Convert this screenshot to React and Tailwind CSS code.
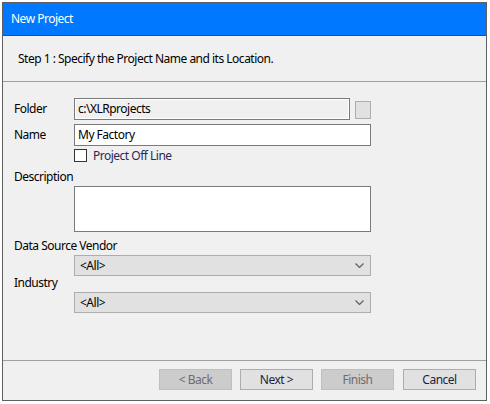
import React from 'react'

const font = { fontFamily: '"Noto Sans", "Open Sans", sans-serif' }

function Chevron() {
  return (
    <svg width="9" height="5" viewBox="0 0 9 5" className="shrink-0">
      <path d="M0.5 0.5 L4.5 4.5 L8.5 0.5" fill="none" stroke="#606060" strokeWidth="1.2" />
    </svg>
  )
}

function Dropdown({ value }) {
  return (
    <div className="ml-[71px] w-[297px] h-[21px] border border-[#adadad] bg-[#e1e1e1] flex items-center justify-between pl-[5px] pr-[6px]">
      <span className="text-[12px] text-black">{value}</span>
      <Chevron />
    </div>
  )
}

function Button({ label, disabled }) {
  return (
    <div
      className={
        disabled
          ? 'w-[73px] h-[21px] border border-[#bfbfbf] bg-[#cccccc] text-[#6d6d6d] flex items-center justify-center text-[12px]'
          : 'w-[73px] h-[21px] border border-[#adadad] bg-[#e1e1e1] text-[#1c2340] flex items-center justify-center text-[12px]'
      }
    >
      {label}
    </div>
  )
}

export default function App() {
  return (
    <div className="w-[490px] h-[404px] bg-white pt-[2px] pl-[2px] tracking-[-0.5px]" style={font}>
      <div className="w-[485px] h-[399px] border border-[#5f5f5f] bg-[#f0f0f0] flex flex-col">
        <div className="h-[33px] shrink-0 bg-[#0078ff] border-b border-[#3c4a5a] flex items-center pl-[8px]">
          <span className="text-[12px] text-white">New Project</span>
        </div>

        <div className="h-[46px] shrink-0 border-b border-[#a0a0a0] flex items-center pl-[15px]">
          <span className="text-[12px] text-black">Step 1 : Specify the Project Name and its Location.</span>
        </div>

        <div className="h-[279px] shrink-0 border-b border-[#a0a0a0] pt-[16px] pl-[11px] text-[12px] text-black">
          <div className="flex items-center h-[22px]">
            <div className="w-[60px]">Folder</div>
            <div className="w-[276px] h-[22px] border border-[#7a7a7a] bg-[#f0f0f0] shadow-[inset_0_0_0_1px_#ffffff] flex items-center pl-[3px]">
              c:\XLRprojects
            </div>
            <div className="ml-[5px] mt-[2px] w-[16px] h-[18px] border border-[#adadad] bg-[#e1e1e1]" />
          </div>

          <div className="flex items-center h-[22px] mt-[4px]">
            <div className="w-[60px]">Name</div>
            <div className="w-[297px] h-[22px] border border-[#7a7a7a] bg-white flex items-center pl-[3px]">
              My Factory
            </div>
          </div>

          <div className="flex items-center h-[13px] mt-[3px] ml-[60px]">
            <div className="w-[13px] h-[13px] border border-[#333333] bg-white" />
            <span className="ml-[6px] text-[#2a2a58]">Project Off Line</span>
          </div>

          <div className="h-[16px] leading-[16px] mt-[7px]">Description</div>
          <div className="ml-[60px] mt-[1px] w-[297px] h-[46px] border border-[#7a7a7a] bg-white" />

          <div className="h-[16px] leading-[16px] mt-[6px]">Data Source Vendor</div>
          <div className="-ml-[11px] mt-[1px]">
            <Dropdown value="<All>" />
          </div>

          <div className="h-[14px] leading-[14px] mt-0">Industry</div>
          <div className="-ml-[11px] mt-[2px]">
            <Dropdown value="<All>" />
          </div>
        </div>

        <div className="flex-1 flex justify-end items-start pt-[8px] pr-[10px] gap-[8px]">
          <Button label="< Back" disabled />
          <Button label="Next >" />
          <Button label="Finish" disabled />
          <div className="ml-px">
            <Button label="Cancel" />
          </div>
        </div>
      </div>
    </div>
  )
}
